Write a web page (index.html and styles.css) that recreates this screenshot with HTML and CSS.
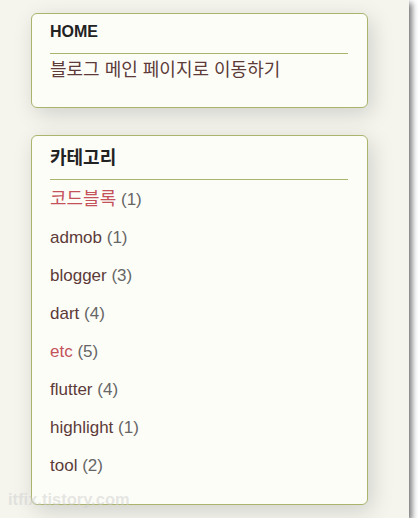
FILE: index.html
```html
<!DOCTYPE html>
<html lang="ko">
<head>
  <meta charset="UTF-8" />
  <title>사이드바</title>
  <link rel="stylesheet" href="styles.css">
</head>
<body>
  <div class="shot">
    <div class="sidebar">
      <!-- 홈 위젯 -->
      <div class="widget">
        <h2 class="widget-title">HOME</h2>
        <div class="widget-text"><a href="#">블로그 메인 페이지로 이동하기</a></div>
      </div>

      <!-- 카테고리 위젯 -->
      <div class="widget widget-cat">
        <h2 class="widget-title">카테고리</h2>
        <ul class="cat-list">
          <li><a href="#" class="on ko">코드블록</a> <span class="count">(1)</span></li>
          <li><a href="#">admob</a> <span class="count">(1)</span></li>
          <li><a href="#">blogger</a> <span class="count">(3)</span></li>
          <li><a href="#">dart</a> <span class="count">(4)</span></li>
          <li><a href="#" class="on">etc</a> <span class="count">(5)</span></li>
          <li><a href="#">flutter</a> <span class="count">(4)</span></li>
          <li><a href="#">highlight</a> <span class="count">(1)</span></li>
          <li><a href="#">tool</a> <span class="count">(2)</span></li>
        </ul>
      </div>
    </div>
    <div class="watermark">itfix.tistory.com</div>
  </div>
</body>
</html>
```

FILE: styles.css
```css
body {
  margin: 0;
  background: #fff;
  font-family: 'Liberation Sans', Arial, 'Noto Sans CJK KR', sans-serif;
}
.shot {
  position: relative;
  width: 409px;
  height: 518px;
  background: #f5f5ee;
  box-shadow: 3px 3px 6px rgba(0, 0, 0, 0.55);
  overflow: hidden;
}
.sidebar {
  display: flex;
  flex-direction: column;
  gap: 27px;
  padding: 13px 0 0 31px;
  width: 337px;
}
.widget {
  background: #fdfdf8;
  border: 1px solid #aab46c;
  border-radius: 6px;
  box-shadow: 4px 6px 22px rgba(0, 0, 0, 0.15);
  padding: 8px 19px 25px 18px;
}
.widget-title {
  margin: 0;
  padding: 0 0 11px;
  font-size: 16px;
  line-height: 20px;
  font-weight: 700;
  color: #222;
  border-bottom: 1px solid #aab46c;
}
.widget-cat {
  padding-bottom: 19px;
}
.widget-cat .widget-title {
  padding: 4px 0 11px;
  font-size: 18px;
}
.widget-text {
  padding-top: 4px;
  font-size: 18px;
  line-height: 24px;
}
a {
  color: #5c3b38;
  text-decoration: none;
}
.cat-list {
  list-style: none;
  margin: 0;
  padding: 0;
}
.cat-list li {
  padding: 7px 0;
  font-size: 17px;
  line-height: 24px;
  color: #5c3b38;
}
.cat-list .ko {
  font-size: 18px;
}
.cat-list a.on {
  color: #c4525b;
}
.count {
  color: #666;
}
.watermark {
  position: absolute;
  left: 8px;
  top: 490px;
  font-size: 16.5px;
  font-weight: 700;
  color: rgba(205, 205, 205, 0.5);
}
```
